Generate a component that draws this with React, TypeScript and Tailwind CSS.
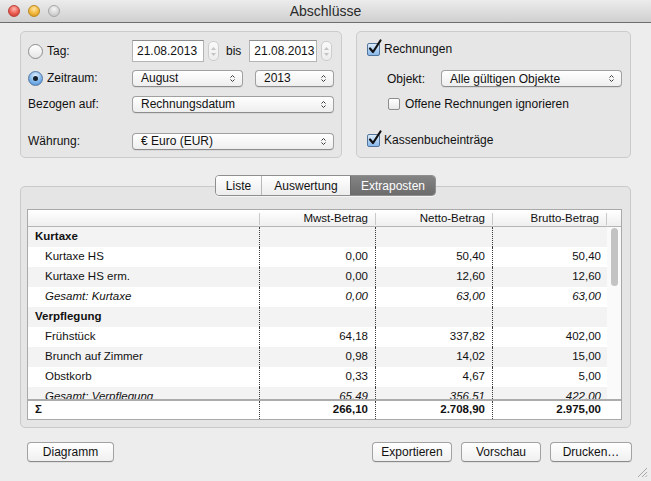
import React from "react";

type Row = {
  label: string;
  kind: "group" | "item" | "total";
  mwst?: string;
  netto?: string;
  brutto?: string;
};

const ROWS: Row[] = [
  { label: "Kurtaxe", kind: "group" },
  { label: "Kurtaxe HS", kind: "item", mwst: "0,00", netto: "50,40", brutto: "50,40" },
  { label: "Kurtaxe HS erm.", kind: "item", mwst: "0,00", netto: "12,60", brutto: "12,60" },
  { label: "Gesamt: Kurtaxe", kind: "total", mwst: "0,00", netto: "63,00", brutto: "63,00" },
  { label: "Verpflegung", kind: "group" },
  { label: "Frühstück", kind: "item", mwst: "64,18", netto: "337,82", brutto: "402,00" },
  { label: "Brunch auf Zimmer", kind: "item", mwst: "0,98", netto: "14,02", brutto: "15,00" },
  { label: "Obstkorb", kind: "item", mwst: "0,33", netto: "4,67", brutto: "5,00" },
  { label: "Gesamt: Verpflegung", kind: "total", mwst: "65,49", netto: "356,51", brutto: "422,00" },
];

function Arrows() {
  return (
    <svg width="5" height="9" viewBox="0 0 5 9" className="shrink-0">
      <path d="M0.5 3.5 L2.5 1.5 L4.5 3.5" fill="none" stroke="#3a3a3a" strokeWidth="1" />
      <path d="M0.5 5.5 L2.5 7.5 L4.5 5.5" fill="none" stroke="#3a3a3a" strokeWidth="1" />
    </svg>
  );
}

function Popup({ label, width }: { label: string; width: string }) {
  return (
    <div
      className={`${width} h-[17px] flex items-center justify-between pl-[8px] pr-[7px] rounded-[4px] border border-[#a0a0a0] border-b-[#8c8c8c] bg-gradient-to-b from-white to-[#eeeeee] shadow-[0_1px_0_rgba(0,0,0,0.06)]`}
    >
      <span className="leading-none">{label}</span>
      <Arrows />
    </div>
  );
}

function Stepper() {
  return (
    <div className="w-[11px] h-[20px] rounded-[5px] border border-[#cdcdcd] bg-gradient-to-b from-[#fafafa] to-[#ececec] flex flex-col items-center justify-center gap-[3px]">
      <svg width="5" height="3" viewBox="0 0 5 3">
        <path d="M0 3 L2.5 0 L5 3 Z" fill="#c4c4c4" />
      </svg>
      <svg width="5" height="3" viewBox="0 0 5 3">
        <path d="M0 0 L2.5 3 L5 0 Z" fill="#c4c4c4" />
      </svg>
    </div>
  );
}

function DateField({ width }: { width: string }) {
  return (
    <div className={`${width} h-[22px] bg-white border border-[#b4b4b4] border-t-[#8f8f8f] flex items-center pl-[4px]`}>
      21.08.2013
    </div>
  );
}

function Radio({ checked }: { checked?: boolean }) {
  if (checked) {
    return (
      <div className="w-[15px] h-[15px] rounded-full border border-[#5577a0] bg-[radial-gradient(circle_at_50%_30%,#e3f0fc,#7fb5ea_55%,#3f86d4)] flex items-center justify-center shrink-0">
        <div className="w-[5px] h-[5px] rounded-full bg-[#15202c]" />
      </div>
    );
  }
  return (
    <div className="w-[15px] h-[15px] rounded-full border border-[#8d8d8d] bg-gradient-to-b from-white to-[#e6e6e6] shrink-0" />
  );
}

function Checkbox({ checked, size = "w-[13px] h-[13px]" }: { checked?: boolean; size?: string }) {
  if (!checked) {
    return (
      <div className={`${size} rounded-[2px] border border-[#8d8d8d] bg-gradient-to-b from-white to-[#e8e8e8] shrink-0`} />
    );
  }
  return (
    <div className={`${size} relative rounded-[2px] border border-[#54759b] bg-gradient-to-b from-[#dcebf9] to-[#86b8ea] shrink-0`}>
      <svg width="14" height="16" viewBox="0 0 14 16" className="absolute -top-[5px] left-[0px] overflow-visible">
        <path d="M2 9.5 L5 13 L12.5 1.5" fill="none" stroke="#111" strokeWidth="2.2" strokeLinecap="round" strokeLinejoin="round" />
      </svg>
    </div>
  );
}

function Light({ cls }: { cls: string }) {
  return <div className={`w-[12px] h-[12px] rounded-full border ${cls}`} />;
}

function TitleBar() {
  return (
    <div className="h-[23px] shrink-0 grid grid-cols-[1fr_auto_1fr] items-center bg-gradient-to-b from-[#ececec] to-[#d0d0d0] border-b border-[#6e6e6e]">
      <div className="flex items-center gap-[8px] pl-[8px]">
        <Light cls="border-[#b8413a] bg-[radial-gradient(circle_at_50%_30%,#ffb9b0,#eb5a50_55%,#c0322a)]" />
        <Light cls="border-[#b98a24] bg-[radial-gradient(circle_at_50%_30%,#ffe6a6,#f2b73a_55%,#cf8e14)]" />
        <Light cls="border-[#a6a6a6] bg-[radial-gradient(circle_at_50%_30%,#f6f6f6,#d6d6d6_55%,#bdbdbd)]" />
      </div>
      <div className="text-[14px] text-[#2a2a2a] leading-none">Abschlüsse</div>
      <div />
    </div>
  );
}

function LeftBox() {
  return (
    <div className="w-[322px] rounded-[5px] border border-[#cbcbcb] bg-[#e6e6e6] flex flex-col pl-[7px] pt-[8px]">
      <div className="grid grid-cols-[104px_1fr] h-[22px] items-center">
        <div className="flex items-center gap-[4px]">
          <Radio />
          <span>Tag:</span>
        </div>
        <div className="flex items-center">
          <DateField width="w-[72px]" />
          <div className="ml-[4px]">
            <Stepper />
          </div>
          <span className="ml-[7px]">bis</span>
          <div className="ml-[8px]">
            <DateField width="w-[68px]" />
          </div>
          <div className="ml-[4px]">
            <Stepper />
          </div>
        </div>
      </div>
      <div className="grid grid-cols-[104px_1fr] h-[17px] items-center mt-[7px]">
        <div className="flex items-center gap-[4px]">
          <Radio checked />
          <span>Zeitraum:</span>
        </div>
        <div className="flex items-center gap-[12px]">
          <Popup label="August" width="w-[111px]" />
          <Popup label="2013" width="w-[79px]" />
        </div>
      </div>
      <div className="grid grid-cols-[104px_1fr] h-[17px] items-center mt-[9px]">
        <span>Bezogen auf:</span>
        <Popup label="Rechnungsdatum" width="w-[202px]" />
      </div>
      <div className="grid grid-cols-[104px_1fr] h-[17px] items-center mt-[20px]">
        <span>Währung:</span>
        <Popup label="€ Euro (EUR)" width="w-[202px]" />
      </div>
    </div>
  );
}

function RightBox() {
  return (
    <div className="flex-1 rounded-[5px] border border-[#cbcbcb] bg-[#e6e6e6] flex flex-col pl-[10px] pt-[10px]">
      <div className="flex items-center gap-[4px] h-[14px]">
        <Checkbox checked />
        <span>Rechnungen</span>
      </div>
      <div className="flex items-center h-[17px] mt-[14px] pl-[20px]">
        <span className="w-[54px]">Objekt:</span>
        <Popup label="Alle gültigen Objekte" width="w-[181px]" />
      </div>
      <div className="flex items-center gap-[5px] h-[14px] mt-[10px] pl-[21px]">
        <Checkbox size="w-[12px] h-[12px]" />
        <span>Offene Rechnungen ignorieren</span>
      </div>
      <div className="flex items-center gap-[4px] h-[14px] mt-[22px]">
        <Checkbox checked />
        <span>Kassenbucheinträge</span>
      </div>
    </div>
  );
}

function Segmented() {
  return (
    <div className="flex justify-center -mt-[12px]">
      <div className="flex h-[21px] rounded-[4px] border border-[#8e8e8e] overflow-hidden shadow-[0_1px_0_rgba(255,255,255,0.6)]">
        <div className="w-[46px] flex items-center justify-center bg-gradient-to-b from-white to-[#ededed] border-r border-[#b8b8b8]">
          Liste
        </div>
        <div className="w-[88px] flex items-center justify-center bg-gradient-to-b from-white to-[#ededed]">
          Auswertung
        </div>
        <div className="w-[85px] flex items-center justify-center bg-gradient-to-b from-[#848484] to-[#6c6c6c] text-white border-l border-[#6a6a6a]">
          Extraposten
        </div>
      </div>
    </div>
  );
}

function HeaderCell({ label, sep = true }: { label: string; sep?: boolean }) {
  return (
    <div className="flex items-center justify-end">
      <span>{label}</span>
      {sep && <span className="ml-[7px] w-px h-[12px] bg-[#c9c9c9]" />}
    </div>
  );
}

function DataTable() {
  const dotted = "border-r border-dotted border-[#3c3c3c]";
  return (
    <div className="ml-[6px] w-[595px] border border-[#a9a9a9] bg-white flex flex-col text-[11.5px] text-[#111]">
      <div className="grid grid-cols-[232px_116px_117px_114px_14px] h-[17px] border-b border-[#b5b5b5] bg-gradient-to-b from-white to-[#efefef]">
        <HeaderCell label="" />
        <HeaderCell label="Mwst-Betrag" />
        <HeaderCell label="Netto-Betrag" />
        <HeaderCell label="Brutto-Betrag" />
        <div />
      </div>
      <div className="flex h-[172px]">
        <div className="w-[579px] overflow-hidden">
          {ROWS.map((r, i) => {
            const bg = i % 2 === 0 ? "bg-[#f3f3f3]" : "bg-white";
            const txt = r.kind === "group" ? "font-bold pl-[7px]" : r.kind === "total" ? "italic pl-[17px]" : "pl-[17px]";
            const num = r.kind === "total" ? "italic" : "";
            return (
              <div key={r.label} className={`grid grid-cols-[232px_116px_117px_114px] h-[20px] shrink-0 ${bg}`}>
                <div className={`flex items-center ${dotted} ${txt}`}>{r.label}</div>
                <div className={`flex items-center justify-end pr-[7px] ${dotted} ${num}`}>{r.mwst}</div>
                <div className={`flex items-center justify-end pr-[7px] ${dotted} ${num}`}>{r.netto}</div>
                <div className={`flex items-center justify-end pr-[6px] ${num}`}>{r.brutto}</div>
              </div>
            );
          })}
        </div>
        <div className="w-[14px] bg-[#fafafa] flex justify-center pt-[1px]">
          <div className="w-[7px] h-[58px] rounded-full bg-[#c3c3c3]" />
        </div>
      </div>
      <div className="grid grid-cols-[232px_116px_117px_114px_14px] h-[20px] border-t-2 border-[#acacac] font-bold bg-white">
        <div className={`flex items-center pl-[7px] ${dotted}`}>Σ</div>
        <div className={`flex items-center justify-end pr-[7px] ${dotted}`}>266,10</div>
        <div className={`flex items-center justify-end pr-[7px] ${dotted}`}>2.708,90</div>
        <div className="flex items-center justify-end pr-[6px]">2.975,00</div>
        <div />
      </div>
    </div>
  );
}

function Button({ label, width }: { label: string; width: string }) {
  return (
    <div
      className={`${width} h-[20px] flex items-center justify-center rounded-[4px] border border-[#a2a2a2] border-b-[#8a8a8a] bg-gradient-to-b from-white to-[#f0f0f0] shadow-[0_1px_0_rgba(0,0,0,0.06)]`}
    >
      {label}
    </div>
  );
}

export default function App() {
  return (
    <div className="relative w-[651px] h-[481px] bg-[#ededed] flex flex-col overflow-hidden font-['Liberation_Sans',Arial,sans-serif] text-[12px] text-[#111]">
      <TitleBar />
      <div className="flex-1 flex flex-col px-[20px] pt-[8px]">
        <div className="flex gap-[14px] h-[127px]">
          <LeftBox />
          <RightBox />
        </div>

        <div className="mt-[28px] rounded-[5px] border border-[#c9c9c9] bg-[#e5e5e5] flex flex-col pb-[7px]">
          <Segmented />
          <div className="mt-[13px]">
            <DataTable />
          </div>
        </div>

        <div className="mt-[14px] flex items-center pl-[7px] -mr-[1px]">
          <Button label="Diagramm" width="w-[87px]" />
          <div className="flex-1" />
          <div className="flex gap-[9px]">
            <Button label="Exportieren" width="w-[80px]" />
            <Button label="Vorschau" width="w-[80px]" />
            <Button label="Drucken…" width="w-[82px]" />
          </div>
        </div>
      </div>
      <svg width="11" height="11" viewBox="0 0 11 11" className="absolute right-[3px] bottom-[3px]">
        <path d="M10 1 L1 10 M10 5 L5 10 M10 8.5 L8.5 10" stroke="#a8a8a8" strokeWidth="1" />
      </svg>
    </div>
  );
}
